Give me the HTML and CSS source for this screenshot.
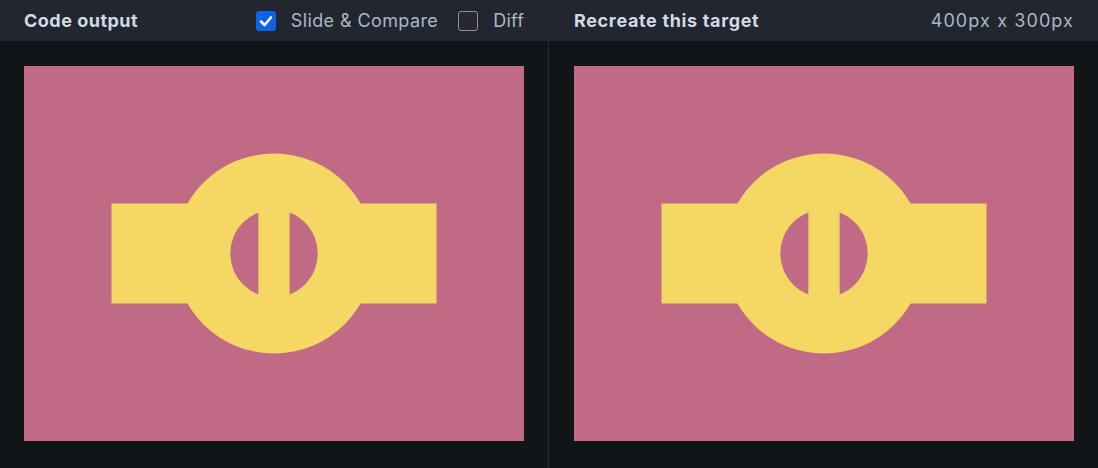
FILE: index.html
```html
<!DOCTYPE html>
<html>
<head>
<meta charset="utf-8">
<link rel="stylesheet" href="styles.css">
</head>
<body>
<div class="app">
  <section class="panel panel-left">
    <header class="bar">
      <span class="title">Code output</span>
      <div class="controls">
        <label class="opt">
          <span class="box box-on"><svg viewBox="0 0 20 20" width="20" height="20"><path d="M5 10.5 L8.6 14 L15 6.5" fill="none" stroke="#fff" stroke-width="2.6" stroke-linecap="round" stroke-linejoin="round"/></svg></span>
          <span class="opt-text">Slide &amp; Compare</span>
        </label>
        <label class="opt">
          <span class="box box-off"></span>
          <span class="opt-text opt-diff">Diff</span>
        </label>
      </div>
    </header>
    <div class="stage">
      <svg class="canvas" viewBox="0 0 400 300" width="500" height="375">
        <rect width="400" height="300" fill="#c06a86"/>
        <rect x="70" y="110" width="260" height="80" fill="#f4d863"/>
        <circle cx="200" cy="150" r="80" fill="#f4d863"/>
        <circle cx="200" cy="150" r="35" fill="#c06a86"/>
        <rect x="187.5" y="110" width="25" height="80" fill="#f4d863"/>
      </svg>
    </div>
  </section>
  <div class="divider"></div>
  <section class="panel panel-right">
    <header class="bar">
      <span class="title title-wide">Recreate this target</span>
      <span class="dims">400px x 300px</span>
    </header>
    <div class="stage">
      <svg class="canvas" viewBox="0 0 400 300" width="500" height="375">
        <rect width="400" height="300" fill="#c06a86"/>
        <rect x="70" y="110" width="260" height="80" fill="#f4d863"/>
        <circle cx="200" cy="150" r="80" fill="#f4d863"/>
        <circle cx="200" cy="150" r="35" fill="#c06a86"/>
        <rect x="187.5" y="110" width="25" height="80" fill="#f4d863"/>
      </svg>
    </div>
  </section>
</div>
</body>
</html>
```

FILE: styles.css
```css
* { box-sizing: border-box; }
html, body {
  margin: 0;
  padding: 0;
  background: #121518;
  font-family: Inter, "Open Sans", sans-serif;
}
.app {
  display: flex;
  width: 1098px;
  height: 468px;
}
.panel {
  display: flex;
  flex-direction: column;
}
.panel-left { width: 548px; }
.panel-right { flex: 1; }
.divider {
  width: 1px;
  background: #252c35;
}
.bar {
  height: 41px;
  background: #22262f;
  display: flex;
  align-items: center;
  justify-content: space-between;
  padding: 0 24px;
}
.panel-right .bar { padding-left: 25px; }
.title {
  color: #d0d9e7;
  font-weight: 700;
  font-size: 18px;
  letter-spacing: 0.5px;
}
.title-wide { letter-spacing: 0.65px; }
.controls {
  display: flex;
  align-items: center;
  gap: 20px;
}
.opt {
  display: flex;
  align-items: center;
  gap: 15px;
}
.opt-text {
  color: #a9b7ca;
  font-size: 18px;
  letter-spacing: 0.4px;
}
.opt-diff { letter-spacing: 0.2px; }
.dims {
  color: #a9b7ca;
  font-size: 18px;
  letter-spacing: 1.1px;
}
.box {
  width: 20px;
  height: 20px;
  border-radius: 3px;
  display: block;
}
.box svg { display: block; }
.box-on { background: #0c64e4; }
.box-off {
  background: #2a2730;
  border: 1.5px solid #8c9099;
}
.stage {
  padding: 25px 24px 0 24px;
}
.panel-right .stage { padding-left: 25px; }
.canvas { display: block; }
```
